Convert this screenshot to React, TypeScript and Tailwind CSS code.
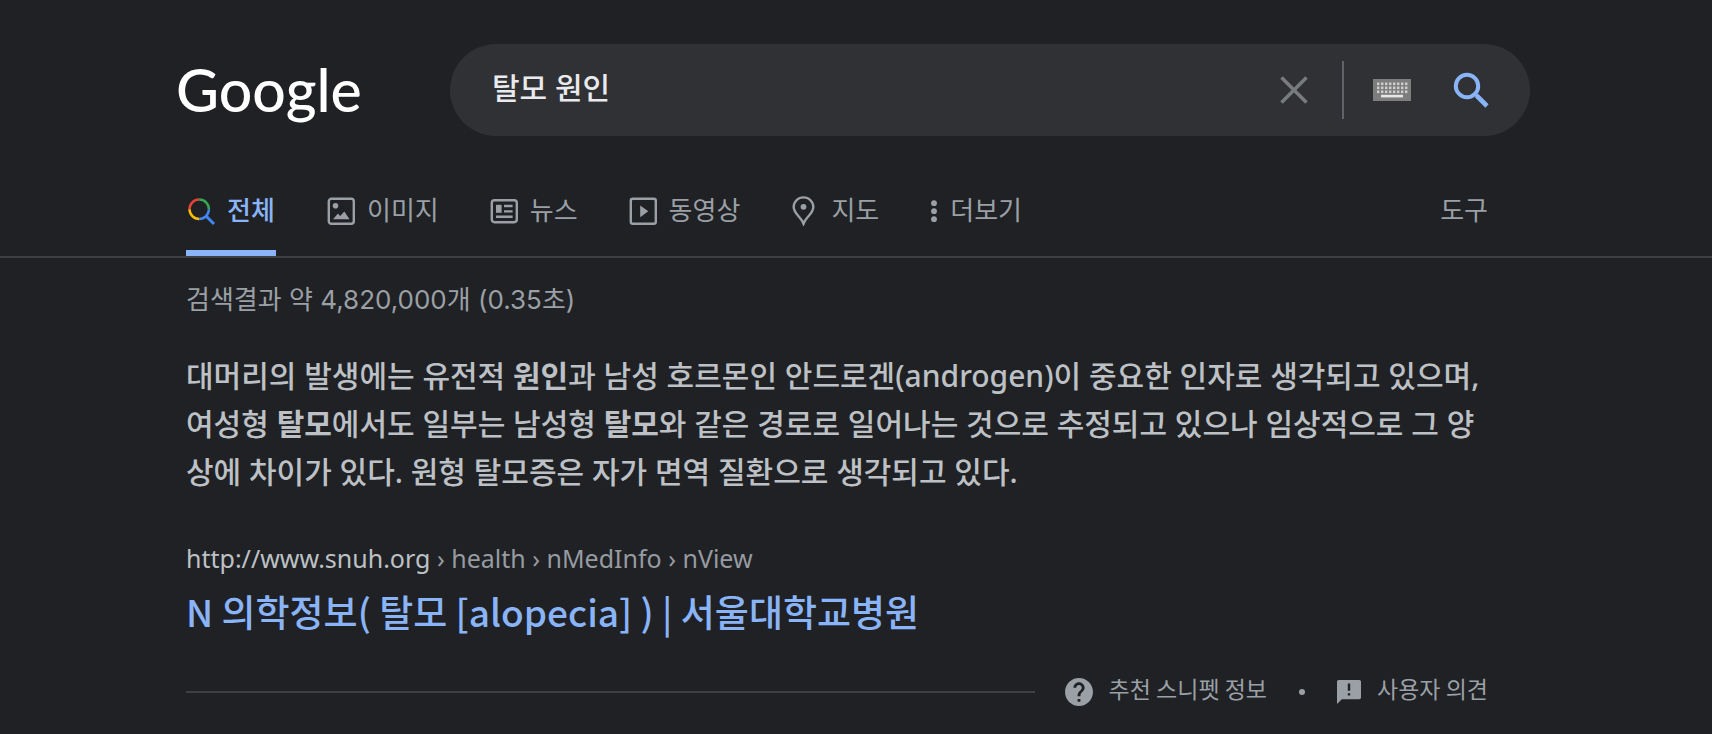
import type { ReactNode } from "react";

function SearchIcon() {
  return (
    <svg viewBox="0 0 36 36" className="size-9" fill="none" stroke="#8ab4f8" aria-hidden="true">
      <circle cx="14" cy="14" r="11.2" strokeWidth="4" />
      <path d="M23.5 23.5 34 34" strokeWidth="4.6" />
      <path d="M21.8 21.8l3 3" strokeWidth="3" />
    </svg>
  );
}

function KeyboardIcon() {
  const rows = [3.5, 7.5, 11.5];
  const cols = [4, 8, 12, 16, 20, 24, 28, 32];
  return (
    <svg viewBox="0 0 38 22" className="h-[22px] w-[38px]" aria-hidden="true">
      <rect width="38" height="22" fill="#7d7d7d" />
      {rows.map((y) =>
        cols.map((x) => <rect key={`${x}-${y}`} x={x} y={y} width="2.4" height="2.6" fill="#cfcfcf" />),
      )}
      <rect x="8" y="15.8" width="22" height="2.6" fill="#e6e6e6" />
    </svg>
  );
}

function ClearIcon() {
  return (
    <svg viewBox="0 0 28 28" className="size-7" stroke="#777b7e" strokeWidth="3.6" aria-hidden="true">
      <path d="M1.5 1.5 26.5 26.5M26.5 1.5 1.5 26.5" />
    </svg>
  );
}

function AllIcon() {
  return (
    <svg viewBox="0 0 30 30" className="size-[30px]" fill="none" strokeWidth="2.5" aria-hidden="true">
      <path d="M3.5 13.2A9.7 9.7 0 0 1 13.2 3.5" stroke="#ea4335" />
      <path d="M13.2 3.5A9.7 9.7 0 0 1 22.9 13.2" stroke="#34a853" />
      <path d="M22.9 13.2A9.7 9.7 0 0 1 13.2 22.9" stroke="#4285f4" />
      <path d="M13.2 22.9A9.7 9.7 0 0 1 3.5 13.2" stroke="#fbbc04" />
      <path d="M19.8 19.8 28 28" stroke="#4285f4" strokeWidth="3" />
    </svg>
  );
}

function ImageIcon() {
  return (
    <svg viewBox="0 0 30 30" className="size-[30px]" fill="none" aria-hidden="true">
      <rect x="2.8" y="2.8" width="25" height="25" rx="2.6" stroke="#9aa0a6" strokeWidth="2.4" />
      <circle cx="9.5" cy="9.8" r="2.8" fill="#9aa0a6" />
      <path d="M7 23.3 12 17.5 14.2 20 18.3 15.5 23.5 23.3Z" fill="#9aa0a6" />
    </svg>
  );
}

function NewsIcon() {
  return (
    <svg viewBox="0 0 30 30" className="size-[30px]" fill="none" aria-hidden="true">
      <rect x="2.8" y="4.2" width="25" height="22" rx="2.6" stroke="#9aa0a6" strokeWidth="2.4" />
      <rect x="7" y="8.8" width="5.6" height="8" fill="#9aa0a6" />
      <path d="M15 10h8.6M15 15.4h8.6M7 20.8h16.6" stroke="#9aa0a6" strokeWidth="2.4" />
    </svg>
  );
}

function VideoIcon() {
  return (
    <svg viewBox="0 0 30 30" className="size-[30px]" fill="none" aria-hidden="true">
      <rect x="2.8" y="2.8" width="25" height="25" rx="2" stroke="#9aa0a6" strokeWidth="2.4" />
      <path d="M12.2 9.4 20.3 15.3 12.2 21.2Z" fill="#9aa0a6" />
    </svg>
  );
}

function PinIcon() {
  return (
    <svg viewBox="0 0 30 30" className="size-[30px]" fill="none" aria-hidden="true">
      <path
        d="M13.5 1.4C7.9 1.4 3.7 5.7 3.7 11.1C3.7 15.2 6.3 17.8 9 20.8C11 23 12.4 25 13.5 27.8C14.6 25 16 23 18 20.8C20.7 17.8 23.3 15.2 23.3 11.1C23.3 5.7 19.1 1.4 13.5 1.4Z"
        stroke="#9aa0a6"
        strokeWidth="2.4"
      />
      <circle cx="13.5" cy="10.8" r="2.9" fill="#9aa0a6" />
    </svg>
  );
}

function MoreIcon() {
  return (
    <svg viewBox="0 0 10 30" className="h-[30px] w-[10px]" fill="#9aa0a6" aria-hidden="true">
      <circle cx="5" cy="7.2" r="2.9" />
      <circle cx="5" cy="15.2" r="2.9" />
      <circle cx="5" cy="23.2" r="2.9" />
    </svg>
  );
}

function HelpIcon() {
  return (
    <svg viewBox="2 2 20 20" className="size-7" fill="#9aa0a6" aria-hidden="true">
      <path d="M12 2C6.48 2 2 6.48 2 12s4.48 10 10 10 10-4.48 10-10S17.52 2 12 2zm1 17h-2v-2h2v2zm2.07-7.75l-.9.92C13.45 12.9 13 13.5 13 15h-2v-.5c0-1.1.45-2.1 1.17-2.83l1.24-1.26c.37-.36.59-.86.59-1.41 0-1.1-.9-2-2-2s-2 .9-2 2H8c0-2.21 1.79-4 4-4s4 1.79 4 4c0 .88-.36 1.68-.93 2.25z" />
    </svg>
  );
}

function FeedbackIcon() {
  return (
    <svg viewBox="2 2 20 20" className="size-6" fill="#9aa0a6" aria-hidden="true">
      <path d="M20.6 2H3.4C2.6 2 2 2.6 2 3.4V22l4-4h14.6c.8 0 1.4-.6 1.4-1.4V3.4C22 2.6 21.4 2 20.6 2zM13 15h-2v-2h2v2zm0-4h-2V5h2v6z" />
    </svg>
  );
}

const tabs: { label: string; icon: ReactNode; active?: boolean }[] = [
  { label: "전체", icon: <AllIcon />, active: true },
  { label: "이미지", icon: <ImageIcon /> },
  { label: "뉴스", icon: <NewsIcon /> },
  { label: "동영상", icon: <VideoIcon /> },
  { label: "지도", icon: <PinIcon /> },
];

export default function App() {
  return (
    <div className="min-h-screen bg-[#202124] pb-7 font-['Noto_Sans','Noto_Sans_CJK_KR',sans-serif] text-[#bdc1c6]">
      <header className="border-b-2 border-[#3c4043] pt-11">
        <div className="flex items-center pl-44">
          <a
            href="#"
            className="w-[274px] shrink-0 font-['Lato',sans-serif] text-[59px] leading-[88px] font-medium text-white"
          >
            Google
          </a>
          <form
            role="search"
            onSubmit={(e) => e.preventDefault()}
            className="mr-8 flex h-[92px] w-full max-w-[1080px] items-center rounded-full bg-[#303134] pr-[41px] pl-[42px]"
          >
            <input
              type="text"
              aria-label="검색"
              defaultValue="탈모 원인"
              className="min-w-0 flex-1 bg-transparent pb-1 text-[30px] leading-10 font-medium text-[#e8eaed] outline-none"
            />
            <button type="button" aria-label="지우기" className="mr-[34px]">
              <ClearIcon />
            </button>
            <span className="mr-[29px] h-[58px] w-0.5 bg-[#5f6368]" />
            <button type="button" aria-label="입력 도구" className="mr-[42px]">
              <KeyboardIcon />
            </button>
            <button type="submit" aria-label="Google 검색">
              <SearchIcon />
            </button>
          </form>
        </div>
        <div className="mt-[50px] ml-[186px] flex max-w-[1302px] items-start justify-between text-[26px] leading-12 text-[#9aa0a6]">
          <nav className="flex gap-[50px]">
            {tabs.map((tab) => (
              <a
                key={tab.label}
                href="#"
                aria-current={tab.active ? "page" : undefined}
                className={
                  tab.active
                    ? "flex h-[70px] min-w-[90px] items-start gap-[11px] border-b-6 border-[#8ab4f8] font-medium text-[#8ab4f8]"
                    : "flex h-[70px] items-start gap-[11px]"
                }
              >
                <span className="flex h-[50px] items-center">{tab.icon}</span>
                {tab.label}
              </a>
            ))}
            <button type="button" className="flex h-[70px] items-start gap-[11px]">
              <span className="flex h-[50px] items-center">
                <MoreIcon />
              </span>
              더보기
            </button>
          </nav>
          <button type="button">도구</button>
        </div>
      </header>

      <main className="ml-[186px] max-w-[1302px]">
        <p className="pt-[22px] font-['Inter','Noto_Sans_CJK_KR',sans-serif] text-[26px] leading-10 text-[#9aa0a6]">
          검색결과 약 4,820,000개 (0.35초)
        </p>
        <p className="mt-8 text-[30px] leading-12 font-medium">
          대머리의 발생에는 유전적 <b>원인</b>과 남성 호르몬인 안드로겐(androgen)이 중요한 인자로 생각되고 있으며, 여성형{" "}
          <b>탈모</b>에서도 일부는 남성형 <b>탈모</b>와 같은 경로로 일어나는 것으로 추정되고 있으나 임상적으로 그 양상에 차이가
          있다. 원형 탈모증은 자가 면역 질환으로 생각되고 있다.
        </p>
        <a href="#" className="mt-[42px] block">
          <cite className="block text-[25px] leading-10 not-italic">
            http://www.snuh.org
            <span className="text-[#969ba1]"> › health › nMedInfo › nView</span>
          </cite>
          <h3 className="mt-[6px] font-['Noto_Sans_CJK_KR',sans-serif] text-[37px] leading-[54px] font-medium text-[#8ab4f8]">
            N 의학정보( 탈모 [alopecia] ) | 서울대학교병원
          </h3>
        </a>
        <footer className="mt-[34px] flex items-center font-['Noto_Sans_CJK_KR',sans-serif] text-[23px] leading-8 text-[#9aa0a6]">
          <span className="mr-[30px] h-0.5 flex-1 bg-[#3c4043]" />
          <a href="#" className="flex items-center gap-4">
            <HelpIcon />
            <span className="pb-2">추천 스니펫 정보</span>
          </a>
          <span className="mx-8 size-[6px] rounded-full bg-[#9aa0a6]" />
          <a href="#" className="flex items-center gap-4">
            <FeedbackIcon />
            <span className="pb-2">사용자 의견</span>
          </a>
        </footer>
      </main>
    </div>
  );
}
